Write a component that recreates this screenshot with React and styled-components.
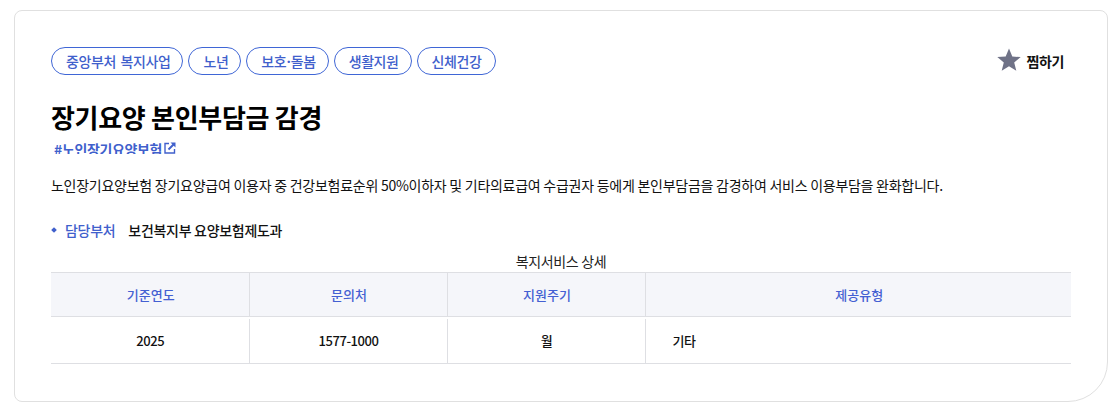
import React from 'react'
import styled, { createGlobalStyle } from 'styled-components'

const Global = createGlobalStyle`
html, body { margin: 0; padding: 0; background: #fff; }
body { font-family: "Noto Sans CJK KR", "Noto Sans", sans-serif; color: #111; }
`
const Page = styled.div`
width: 1120px;
height: 411px;
padding: 10px 12px 9px 14px;
box-sizing: border-box;
overflow: hidden;
`
const Card = styled.section`
height: 392px;
box-sizing: border-box;
border: 1px solid #e0e0e0;
border-radius: 8px 8px 40px 8px;
padding: 36px 36px 0 36px;
`
const TopRow = styled.div`
display: flex;
justify-content: space-between;
align-items: flex-start;
`
const Tags = styled.ul`
display: flex;
gap: 5px;
list-style: none;
margin: 0;
padding: 0;
`
const Tag = styled.li`
height: 28px;
box-sizing: border-box;
padding: 0 12px 0 14px;
border: 1px solid #3f66d6;
border-radius: 14px;
color: #4060cc;
font-size: 14px;
font-weight: 500;
line-height: 26px;
letter-spacing: -0.42px;
word-spacing: 2px;
&:last-child {
  padding-right: 14px;
}
`
const Dot = styled.span`
font-family: "Noto Sans", sans-serif;
font-weight: 700;
padding: 0 0.5px;
`
const Favorite = styled.button`
display: flex;
align-items: center;
gap: 4px;
border: 0;
background: none;
padding: 0;
margin: 0 7px 0 0;
height: 28px;
font: inherit;
font-size: 14px;
font-weight: 700;
color: #111;
letter-spacing: -0.35px;
`
const Title = styled.h2`
margin: 23px 0 0;
font-size: 26px;
line-height: 38px;
font-weight: 700;
color: #000;
letter-spacing: -0.3px;
`
const Keyword = styled.a`
display: flex;
align-items: flex-start;
gap: 2px;
height: 13px;
overflow: hidden;
margin: 5px 0 0 3px;
color: #4060cc;
font-size: 14px;
font-weight: 700;
line-height: 16px;
letter-spacing: -0.35px;
`
const Summary = styled.p`
margin: 21px 0 0;
font-size: 14px;
line-height: 20px;
color: #111;
letter-spacing: -0.26px;
`
const Info = styled.div`
display: flex;
align-items: center;
margin-top: 25px;
font-size: 14px;
line-height: 20px;
letter-spacing: -0.3px;
`
const Bullet = styled.span`
width: 4px;
height: 4px;
margin: 0 9px 0 1px;
background: #4060cc;
transform: rotate(45deg);
`
const InfoLabel = styled.span`
color: #4060cc;
font-weight: 500;
margin-right: 13px;
`
const InfoValue = styled.span`
font-weight: 500;
color: #111;
`
const Table = styled.table`
width: 1020px;
margin-top: 11px;
border-collapse: collapse;
table-layout: fixed;
font-size: 13px;
`
const Caption = styled.caption`
height: 21px;
line-height: 20px;
color: #222;
font-size: 14px;
letter-spacing: -0.35px;
`
const Head = styled.th`
height: 43px;
padding: 0 0 0 2px;
background: #f5f6fa;
border-top: 1px solid #dedfe3;
border-bottom: 1px solid #dedfe3;
border-left: ${p => (p.$first ? 0 : '1px solid #dedfe3')};
color: #4460d2;
font-weight: 500;
`
const Cell = styled.td`
position: relative;
height: 46px;
padding: ${p => (p.$left ? '0 0 0 27px' : '0 0 0 1px')};
text-align: ${p => (p.$left ? 'left' : 'center')};
border-bottom: 1px solid #dedfe3;
border-left: ${p => (p.$first ? 0 : '1px solid #dedfe3')};
color: #111;
font-weight: 500;
font-size: 13px;
letter-spacing: -0.45px;
&::before {
  content: "";
  position: absolute;
  top: 0;
  left: -1px;
  width: 1px;
  height: 2px;
  background: #fff;
}
`

const tags = ['중앙부처 복지사업', '노년', <>보호<Dot>·</Dot>돌봄</>, '생활지원', '신체건강']

function Star() {
  return (
    <svg width="26" height="26" viewBox="0 0 26 26" aria-hidden="true" style={{ marginTop: -3 }}>
      <path fill="#6f7287" d="M13 1.500l3.300 8 8.400.6-6.500 5.400 2.100 8.300-7.300-4.600-7.300 4.600 2.100-8.300-6.500-5.400 8.400-.6z" />
    </svg>
  )
}

function External() {
  return (
    <svg width="12" height="12" viewBox="0 0 12 12" aria-hidden="true" style={{ marginTop: 1 }}>
      <path fill="none" stroke="#4060cc" strokeWidth="1.4" d="M5 1.500H1v9.500h9.500V7" />
      <path fill="none" stroke="#4060cc" strokeWidth="2" d="M4.500 7.500L9.500 2.500" />
      <path fill="#4060cc" d="M6.500 .5H11.500V5.500z" />
    </svg>
  )
}

export default function App() {
  return (
    <Page>
      <Global />
      <Card>
        <TopRow>
          <Tags>
            {tags.map((t, i) => <Tag key={i}>{t}</Tag>)}
          </Tags>
          <Favorite><Star />찜하기</Favorite>
        </TopRow>
        <Title>장기요양 본인부담금 감경</Title>
        <Keyword>#노인장기요양보험<External /></Keyword>
        <Summary>노인장기요양보험 장기요양급여 이용자 중 건강보험료순위 50%이하자 및 기타의료급여 수급권자 등에게 본인부담금을 감경하여 서비스 이용부담을 완화합니다.</Summary>
        <Info>
          <Bullet />
          <InfoLabel>담당부처</InfoLabel>
          <InfoValue>보건복지부 요양보험제도과</InfoValue>
        </Info>
        <Table>
          <Caption>복지서비스 상세</Caption>
          <colgroup>
            <col width="198" />
            <col width="198" />
            <col width="198" />
            <col width="426" />
          </colgroup>
          <thead>
            <tr>
              <Head $first>기준연도</Head>
              <Head>문의처</Head>
              <Head>지원주기</Head>
              <Head>제공유형</Head>
            </tr>
          </thead>
          <tbody>
            <tr>
              <Cell $first>2025</Cell>
              <Cell>1577-1000</Cell>
              <Cell>월</Cell>
              <Cell $left>기타</Cell>
            </tr>
          </tbody>
        </Table>
      </Card>
    </Page>
  )
}
